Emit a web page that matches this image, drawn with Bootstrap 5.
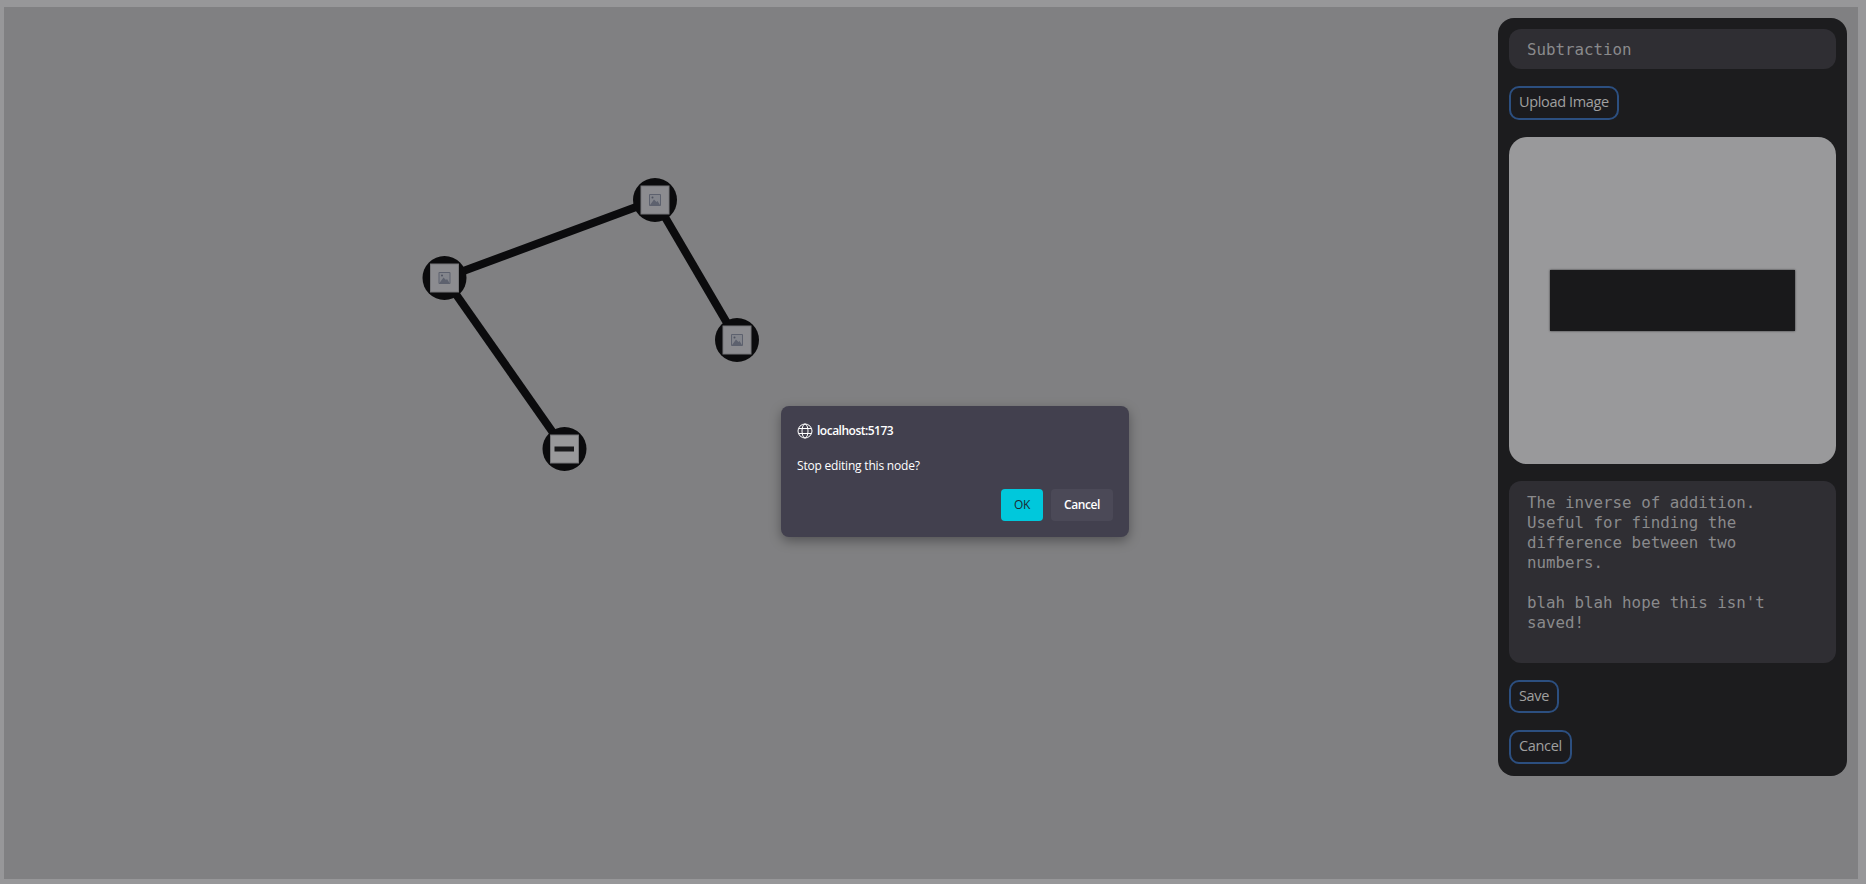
<!DOCTYPE html>
<html>
  <head>
    <title>Node editor</title>
    <link
      href="https://cdn.jsdelivr.net/npm/bootstrap@5.3.3/dist/css/bootstrap.min.css"
      rel="stylesheet"
    />
    <script src="https://cdn.jsdelivr.net/npm/bootstrap@5.3.3/dist/js/bootstrap.bundle.min.js"></script>
    <style>
      html, body { height: 100%; }
      body {
        background: #979799;
        padding: 7px 8px 5px 4px;
        overflow: hidden;
      }
      .graph-area {
        height: 100%;
        background: #808082;
        padding: 11px 11px 0 0;
      }
      .graph-svg { left: 0; top: 0; }
      .side-panel {
        width: 349px;
        height: 758px;
        background: #1c1c1e;
        border-radius: 16px;
        padding: 11px;
        gap: 17.2px;
      }
      .mono-field, .mono-field:focus {
        font-family: "DejaVu Sans Mono", monospace;
        font-size: 15.8px;
        line-height: 20px;
        color: #8a8a8c;
        background: #2f2e33;
        border: 0;
        border-radius: 12px;
        padding: 10px 18px;
        box-shadow: none;
        resize: none;
        overflow: hidden;
      }
      .title-field { height: 40px; }
      .notes-field { height: 181.5px; padding-top: 12px; }
      .outline-btn {
        font-family: "Open Sans", sans-serif;
        font-size: 14.5px;
        line-height: 20px;
        letter-spacing: -0.35px;
        color: #a0a0a0;
        background: #1b1b1e;
        border: 2px solid #2c4f80;
        border-radius: 10px;
        padding: 3.75px 8px 5.75px;
      }
      .preview-box {
        height: 327px;
        background: #99999b;
        border-radius: 18px;
      }
      .preview-bar {
        width: 245px;
        height: 61px;
        background: #19191b;
        box-shadow: 0 0 2px #333;
      }
      .confirm-box {
        left: 777px;
        top: 399px;
        width: 348px;
        height: 131px;
        background: #42404e;
        border-radius: 8px;
        box-shadow: 0 4px 12px rgba(0, 0, 0, 0.35);
        padding: 16px;
        font-family: "Open Sans", sans-serif;
        font-size: 12px;
        letter-spacing: -0.2px;
        color: #fff;
      }
      .confirm-origin { font-weight: 600; line-height: 16px; letter-spacing: -0.5px; margin-top: 1px; }
      .confirm-text { margin-top: 19px; line-height: 16px; }
      .confirm-actions { gap: 8px; margin-top: 15px; }
      .confirm-btn {
        height: 32px;
        font-size: 12px;
        font-weight: 600;
        line-height: 16px;
        letter-spacing: -0.4px;
        border: 0;
        border-radius: 4px;
        padding: 0;
        color: #fff;
        background: #4b4957;
      }
      .confirm-ok { width: 42px; color: #1d2a33; background: #00c8dc; font-weight: 400; }
      .confirm-cancel { width: 62px; }
    </style>
  </head>
  <body>
    <div class="graph-area position-relative d-flex justify-content-end align-items-start">
      <svg class="graph-svg position-absolute" width="1854" height="872">
        <defs>
          <g id="picNode">
            <circle r="22" fill="#0b0b0d" />
            <rect x="-14" y="-14" width="28" height="28" fill="#8c8c90" stroke="#77777a" />
            <rect x="-6" y="-6" width="12" height="12" rx="1" fill="#5d616e" />
            <rect x="-5" y="-5" width="10" height="10" fill="#83858c" />
            <circle cx="-2.5" cy="-2.5" r="1" fill="#4f5360" />
            <path d="M-5 5 L-1 -0.5 L1.5 2 L2.5 1 L5 5 Z" fill="#5d616e" />
          </g>
        </defs>
        <g stroke="#0b0b0d" stroke-width="8">
          <line x1="440.5" y1="271" x2="651" y2="193" />
          <line x1="651" y1="193" x2="733" y2="333" />
          <line x1="440.5" y1="271" x2="560.5" y2="442" />
        </g>
        <use href="#picNode" x="440.5" y="271" />
        <use href="#picNode" x="651" y="193" />
        <use href="#picNode" x="733" y="333" />
        <g transform="translate(560.5 442)">
          <circle r="22" fill="#0b0b0d" />
          <rect x="-14" y="-14" width="28" height="28" fill="#99999b" stroke="#77777a" />
          <rect x="-10" y="-2.5" width="19.5" height="5" fill="#19191b" />
        </g>
      </svg>

      <div class="side-panel position-relative d-flex flex-column align-items-start">
        <input type="text" class="form-control mono-field title-field" value="Subtraction" />
        <button type="button" class="btn outline-btn">Upload Image</button>
        <div class="preview-box w-100 d-flex align-items-center justify-content-center">
          <div class="preview-bar"></div>
        </div>
        <textarea class="form-control mono-field notes-field">The inverse of addition. Useful for finding the difference between two numbers.

blah blah hope this isn't saved!</textarea>
        <button type="button" class="btn outline-btn">Save</button>
        <button type="button" class="btn outline-btn">Cancel</button>
      </div>

      <div class="confirm-box position-absolute">
        <div class="confirm-origin d-flex align-items-center gap-1">
          <svg width="16" height="16" viewBox="0 0 16 16" fill="none" stroke="#fff" stroke-width="1">
            <circle cx="8" cy="8" r="7" />
            <ellipse cx="8" cy="8" rx="3" ry="7" />
            <path d="M1.5 5.5 H14.5 M1.5 10.5 H14.5" />
          </svg>
          <span>localhost:5173</span>
        </div>
        <div class="confirm-text">Stop editing this node?</div>
        <div class="confirm-actions d-flex justify-content-end">
          <button type="button" class="btn confirm-btn confirm-ok">OK</button>
          <button type="button" class="btn confirm-btn confirm-cancel">Cancel</button>
        </div>
      </div>
    </div>
  </body>
</html>
